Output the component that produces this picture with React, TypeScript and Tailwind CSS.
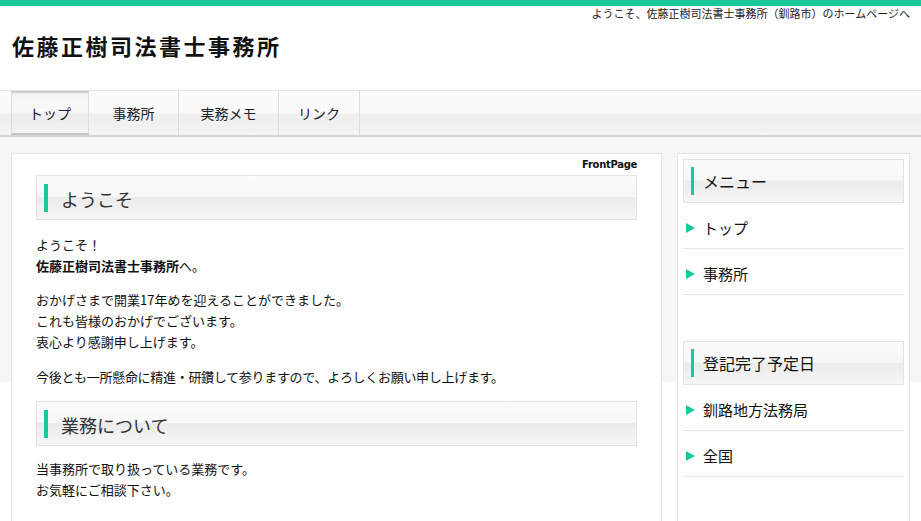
const tabs = [
  { label: "トップ", w: "w-[78px]", active: true },
  { label: "事務所", w: "w-[90px]" },
  { label: "実務メモ", w: "w-[100px]" },
  { label: "リンク", w: "w-[81px]" },
];

function Heading({ children }: { children: React.ReactNode }) {
  return (
    <h2 className="h-[45px] border border-[#e3e3e3] bg-[linear-gradient(to_bottom,#fbfbfb_0%,#f7f7f7_48%,#ebebeb_50%,#f6f6f6_100%)] flex items-center pl-[7px]">
      <span className="w-[4px] h-[28px] bg-[#19c99b]" />
      <span className="ml-[13px] text-[18px] leading-none text-[#333] pt-[3px]">{children}</span>
    </h2>
  );
}

function SideHeading({ children }: { children: React.ReactNode }) {
  return (
    <h3 className="h-[44px] border border-[#e3e3e3] bg-[linear-gradient(to_bottom,#fbfbfb_0%,#f7f7f7_48%,#ebebeb_50%,#f6f6f6_100%)] flex items-center pl-[7px]">
      <span className="w-[3px] h-[28px] bg-[#19c99b]" />
      <span className="ml-[9px] text-[16px] leading-none text-[#111]">{children}</span>
    </h3>
  );
}

function SideItem({ label }: { label: string }) {
  return (
    <li className="flex items-center pt-[15px] pb-[11px] border-b border-dotted border-[#d8d8d8] text-[15px] leading-[19px] text-[#111]">
      <svg width="9" height="10" viewBox="0 0 9 10" className="ml-[3px] mr-[8px]">
        <polygon points="0,0 9,5 0,10" fill="#19c99b" />
      </svg>
      {label}
    </li>
  );
}

export default function App() {
  return (
    <div className="w-[921px] min-h-[521px] bg-white font-['Noto_Sans_CJK_JP',sans-serif] text-black overflow-hidden">
      {/* Header */}
      <div className="h-[6px] bg-[#19c99b]" />
      <div className="h-[84px] px-[11px]">
        <p className="text-right text-[11px] leading-[14px] text-[#222]">
          ようこそ、佐藤正樹司法書士事務所（釧路市）のホームページへ
        </p>
        <h1 className="mt-[11px] pl-[1px] text-[22px] leading-[28px] font-bold tracking-[2.5px] text-[#111]">
          佐藤正樹司法書士事務所
        </h1>
      </div>

      {/* Nav */}
      <nav className="h-[47px] border-t border-[#e6e6e6] border-b-2 border-b-[#d6d6d6] bg-[linear-gradient(to_bottom,#fcfcfc_0%,#f9f9f9_50%,#eeeeee_53%,#f4f4f4_100%)] px-[11px] flex">
        {tabs.map((t, i) => (
          <div
            key={t.label}
            className={`${t.w} h-full flex items-center justify-center text-[14px] text-[#222] border-r border-[#dcdcdc] ${
              i === 0 ? "border-l" : ""
            } ${t.active ? "border-t-2 border-t-[#cfcfcf] border-b-2 border-b-[#c4c4c4] bg-[linear-gradient(to_bottom,#f4f4f4_0%,#f9f9f9_45%,#ececec_55%,#f2f2f2_100%)]" : ""}`}
          >
            {t.label}
          </div>
        ))}
      </nav>

      {/* Body */}
      <div className="flex gap-[15px] px-[11px] pt-[16px] bg-[linear-gradient(to_bottom,#f6f6f6_0px,#f6f6f6_245px,#ffffff_245px)]">
        <main className="w-[651px] min-h-[380px] border border-[#e5e5e5] bg-white px-[24px] pt-[5px] pb-[30px]">
          <p className="text-right text-[10px] leading-[12px] font-bold font-['DejaVu_Sans',sans-serif] text-[#111] tracking-[-0.3px] mb-[4px]">
            FrontPage
          </p>
          <Heading>ようこそ</Heading>
          <div className="text-[13px] leading-[21px] text-[#111]">
            <p className="mt-[14px]">
              ようこそ！
              <br />
              <strong className="font-bold">佐藤正樹司法書士事務所</strong>へ。
            </p>
            <p className="mt-[13px]">
              おかげさまで開業17年めを迎えることができました。
              <br />
              これも皆様のおかげでございます。
              <br />
              衷心より感謝申し上げます。
            </p>
            <p className="mt-[14px] tracking-[-0.3px]">今後とも一所懸命に精進・研鑽して参りますので、よろしくお願い申し上げます。</p>
          </div>
          <div className="mt-[14px]">
            <Heading>業務について</Heading>
          </div>
          <div className="text-[13px] leading-[21px] text-[#111]">
            <p className="mt-[12px]">
              当事務所で取り扱っている業務です。
              <br />
              お気軽にご相談下さい。
            </p>
          </div>
        </main>

        <aside className="w-[233px] min-h-[380px] border border-[#e5e5e5] bg-white p-[5px]">
          <SideHeading>メニュー</SideHeading>
          <ul>
            <SideItem label="トップ" />
            <SideItem label="事務所" />
          </ul>
          <div className="mt-[46px]">
            <SideHeading>登記完了予定日</SideHeading>
          </div>
          <ul>
            <SideItem label="釧路地方法務局" />
            <SideItem label="全国" />
          </ul>
        </aside>
      </div>
    </div>
  );
}
